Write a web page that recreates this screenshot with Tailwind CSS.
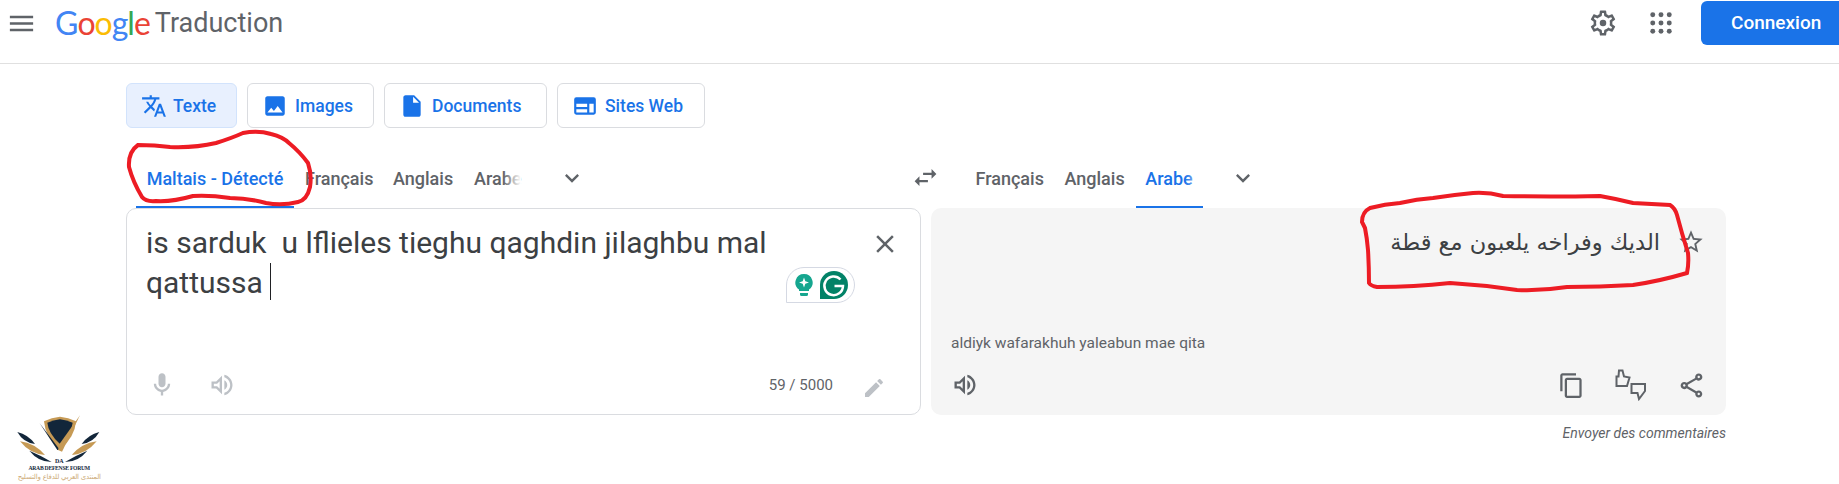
<!DOCTYPE html>
<html lang="fr">

<head>
    <meta charset="UTF-8">
    <title>Google Traduction</title>
    <script src="https://cdn.jsdelivr.net/npm/@tailwindcss/browser@4"></script>
</head>

<body class="relative h-[484px] w-[1839px] overflow-hidden bg-white font-['Roboto',sans-serif] text-[#5f6368]">

    <!-- Header -->
    <header class="flex h-[64px] items-start border-b border-[#e0e0e0]">
        <svg class="ml-[6px] mt-[8px] w-[31px] h-[31px] fill-[#5f6368]" viewBox="0 0 24 24"><path d="M3 18h18v-2H3v2zm0-5h18v-2H3v2zm0-7v2h18V6H3z"/></svg>
        <div class="ml-[18px] mt-[3px] flex h-[40px] items-center font-['Lato',sans-serif] text-[32px] leading-[40px] tracking-[-1px]">
            <span class="text-[#4285f4]">G</span><span class="text-[#ea4335]">o</span><span class="text-[#fbbc04]">o</span><span class="text-[#4285f4]">g</span><span class="text-[#34a853]">l</span><span class="text-[#ea4335]">e</span>
        </div>
        <div class="ml-[5px] mt-[4px] text-[27px] leading-[38px] font-normal text-[#5f6368]">Traduction</div>

        <svg class="ml-auto mt-[8px] w-[30px] h-[30px] fill-[#5f6368]" viewBox="0 0 24 24"><path d="M19.43 12.98c.04-.32.07-.64.07-.98 0-.34-.03-.66-.07-.98l2.11-1.65c.19-.15.24-.42.12-.64l-2-3.46c-.09-.16-.26-.25-.44-.25-.06 0-.12.01-.17.03l-2.49 1c-.52-.4-1.08-.73-1.69-.98l-.38-2.65C14.46 2.18 14.25 2 14 2h-4c-.25 0-.46.18-.49.42l-.38 2.65c-.61.25-1.17.59-1.69.98l-2.49-1c-.06-.02-.12-.03-.18-.03-.17 0-.34.09-.43.25l-2 3.46c-.13.22-.07.49.12.64l2.11 1.65c-.04.32-.07.65-.07.98 0 .33.03.66.07.98l-2.11 1.65c-.19.15-.24.42-.12.64l2 3.46c.09.16.26.25.44.25.06 0 .12-.01.17-.03l2.49-1c.52.4 1.08.73 1.69.98l.38 2.65c.03.24.24.42.49.42h4c.25 0 .46-.18.49-.42l.38-2.65c.61-.25 1.17-.59 1.69-.98l2.49 1c.06.02.12.03.18.03.17 0 .34-.09.43-.25l2-3.46c.12-.22.07-.49-.12-.64l-2.11-1.65zm-1.98-1.71c.04.31.05.52.05.73 0 .21-.02.43-.05.73l-.14 1.13.89.7 1.08.84-.7 1.21-1.27-.51-1.04-.42-.9.68c-.43.32-.84.56-1.25.73l-1.06.43-.16 1.13-.2 1.35h-1.4l-.19-1.35-.16-1.13-1.06-.43c-.43-.18-.83-.41-1.23-.71l-.91-.7-1.06.43-1.27.51-.7-1.21 1.08-.84.89-.7-.14-1.13c-.03-.31-.05-.54-.05-.74s.02-.43.05-.73l.14-1.13-.89-.7-1.08-.84.7-1.21 1.27.51 1.04.42.9-.68c.43-.32.84-.56 1.25-.73l1.06-.43.16-1.13.2-1.35h1.39l.19 1.35.16 1.13 1.06.43c.43.18.83.41 1.23.71l.91.7 1.06-.43 1.27-.51.7 1.21-1.07.85-.89.7.14 1.13z"/><circle cx="12" cy="12" r="2.6"/></svg>
        <svg class="ml-[32px] mt-[12px] w-[22px] h-[22px] fill-[#5f6368]" viewBox="0 0 24 24">
            <circle cx="3" cy="3" r="2.7"/><circle cx="12" cy="3" r="2.7"/><circle cx="21" cy="3" r="2.7"/>
            <circle cx="3" cy="12" r="2.7"/><circle cx="12" cy="12" r="2.7"/><circle cx="21" cy="12" r="2.7"/>
            <circle cx="3" cy="21" r="2.7"/><circle cx="12" cy="21" r="2.7"/><circle cx="21" cy="21" r="2.7"/>
        </svg>
        <button class="ml-[29px] mt-[1px] h-[44px] w-[138px] rounded-l-[6px] bg-[#1a73e8] pl-[30px] text-left text-[19px] font-medium text-white">Connexion</button>
    </header>

    <!-- Mode tabs -->
    <nav class="ml-[126px] mt-[19px] flex h-[45px] gap-[10px] text-[17.5px] font-medium text-[#1a73e8]">
        <button class="flex w-[111px] items-center rounded-[6px] border border-[#d2e3fc] bg-[#e8f0fe] pl-[14px]">
            <svg class="w-[26px] h-[26px] fill-[#1a73e8]" viewBox="0 0 24 24"><path d="M12.87 15.07l-2.54-2.51.03-.03c1.74-1.94 2.98-4.17 3.71-6.53H17V4h-7V2H8v2H1v1.99h11.17C11.5 7.92 10.44 9.75 9 11.35 8.07 10.32 7.3 9.19 6.69 8h-2c.73 1.63 1.73 3.17 2.98 4.56l-5.09 5.02L4 19l5-5 3.11 3.11.76-2.04zM18.5 10h-2L12 22h2l1.12-3h4.75L21 22h2l-4.5-12zm-2.62 7l1.62-4.33L19.12 17h-3.24z"/></svg>
            <span class="ml-[6px] pt-[2px]">Texte</span>
        </button>
        <button class="flex w-[127px] items-center rounded-[6px] border border-[#dadce0] pl-[14px]">
            <svg class="w-[26px] h-[26px] fill-[#1a73e8]" viewBox="0 0 24 24"><path d="M21 19V5c0-1.1-.9-2-2-2H5c-1.1 0-2 .9-2 2v14c0 1.1.9 2 2 2h14c1.1 0 2-.9 2-2zM8.5 13.5l2.5 3.01L14.5 12l4.5 6H5l3.5-4.5z"/></svg>
            <span class="ml-[7px] pt-[2px]">Images</span>
        </button>
        <button class="flex w-[163px] items-center rounded-[6px] border border-[#dadce0] pl-[14px]">
            <svg class="w-[26px] h-[26px] fill-[#1a73e8]" viewBox="0 0 24 24"><path d="M14 2H6c-1.1 0-1.99.9-1.99 2L4 20c0 1.1.89 2 1.99 2H18c1.1 0 2-.9 2-2V8l-6-6zm-1 7V3.5L18.5 9H13z"/></svg>
            <span class="ml-[7px] pt-[2px]">Documents</span>
        </button>
        <button class="flex w-[148px] items-center rounded-[6px] border border-[#dadce0] pl-[14px]">
            <svg class="w-[26px] h-[26px] fill-[#1a73e8]" viewBox="0 0 24 24"><path fill-rule="evenodd" d="M20 4H4a2 2 0 0 0-2 2v12a2 2 0 0 0 2 2h16a2 2 0 0 0 2-2V6a2 2 0 0 0-2-2zM4 10h10v3H4zM4 15h10v3H4zM16 10h4v8h-4z"/></svg>
            <span class="ml-[7px] pt-[2px]">Sites Web</span>
        </button>
    </nav>

    <!-- Language row -->
    <div class="flex h-[80px] text-[18px] font-medium">
        <div class="ml-[136px] flex w-[158px] justify-center border-b-2 border-[#1a73e8] pt-[22px] text-[#1a73e8]"><span class="self-center">Maltais - Détecté</span></div>
        <div class="ml-[11px] flex w-[68px] border-b-2 border-transparent pt-[22px]"><span class="self-center">Français</span></div>
        <div class="ml-[20px] flex w-[60px] border-b-2 border-transparent pt-[22px]"><span class="self-center">Anglais</span></div>
        <div class="relative ml-[21px] flex w-[47px] border-b-2 border-transparent pt-[22px]">
            <span class="self-center">Arabe</span>
            <div class="absolute right-0 top-[36px] h-[24px] w-[18px] bg-linear-to-r from-white/0 to-white"></div>
        </div>
        <svg class="ml-[37px] mt-[36px] w-[28px] h-[28px] fill-[#5f6368]" viewBox="0 0 24 24"><path d="M7.41 8.59L12 13.17l4.59-4.58L18 10l-6 6-6-6z"/></svg>
        <svg class="ml-[325px] mt-[35px] w-[29px] h-[29px] fill-[#5f6368]" viewBox="0 0 24 24"><path d="M6.99 11L3 15l3.99 4v-3H14v-2H6.99v-3zM21 9l-3.99-4v3H10v2h7.01v3L21 9z"/></svg>
        <div class="ml-[35.5px] flex w-[69px] border-b-2 border-transparent pt-[22px]"><span class="self-center">Français</span></div>
        <div class="ml-[20px] flex w-[60px] border-b-2 border-transparent pt-[22px]"><span class="self-center">Anglais</span></div>
        <div class="relative ml-[11px] flex w-[67px] justify-center border-b-2 border-[#1a73e8] pt-[22px] text-[#1a73e8]">
            <span class="self-center">Arabe</span>
            <div class="absolute right-0 top-[36px] h-[26px] w-[18px] bg-linear-to-r from-white/0 to-white/80"></div>
        </div>
        <svg class="ml-[26px] mt-[36px] w-[28px] h-[28px] fill-[#5f6368]" viewBox="0 0 24 24"><path d="M7.41 8.59L12 13.17l4.59-4.58L18 10l-6 6-6-6z"/></svg>
    </div>

    <!-- Translation cards -->
    <main class="ml-[126px] flex items-start gap-[10px]">
        <section class="relative flex h-[207px] w-[795px] flex-col rounded-[10px] border border-[#dadce0]">
            <div class="flex items-start justify-between pr-[11px]">
                <p class="w-[660px] whitespace-pre-wrap pl-[19px] pt-[14px] text-[30px] leading-[40px] text-[#3c4043]">is sarduk  u lflieles tieghu qaghdin jilaghbu mal qattussa <span class="relative"><span class="absolute left-0 top-[-2px] h-[37px] w-px bg-[#202124]"></span></span></p>
                <button class="mt-[11px] flex h-[48px] w-[48px] items-center justify-center">
                    <svg class="w-[30px] h-[30px] fill-[#5f6368]" viewBox="0 0 24 24"><path d="M19 6.41L17.59 5 12 10.59 6.41 5 5 6.41 10.59 12 5 17.59 6.41 19 12 13.41 17.59 19 19 17.59 13.41 12z"/></svg>
                </button>
            </div>
            <div class="mb-[5px] mt-auto flex h-[48px] items-center gap-[12px] pl-[11px] pr-[22px]">
                <div class="flex h-[48px] w-[48px] items-center justify-center">
                    <svg class="w-[28px] h-[28px] fill-[#bdc1c6]" viewBox="0 0 24 24"><path d="M12 14c1.66 0 3-1.34 3-3V5c0-1.66-1.34-3-3-3S9 3.34 9 5v6c0 1.66 1.34 3 3 3zM17 11c0 2.76-2.24 5-5 5s-5-2.24-5-5H5c0 3.53 2.61 6.43 6 6.92V21h2v-3.08c3.39-.49 6-3.39 6-6.92h-2z"/></svg>
                </div>
                <div class="flex h-[48px] w-[48px] items-center justify-center">
                    <svg class="w-[28px] h-[28px] fill-[#bdc1c6]" viewBox="0 0 24 24"><path d="M3 9v6h4l5 5V4L7 9H3zm7-.17v6.34L7.83 13H5v-2h2.83L10 8.83zM16.5 12c0-1.77-1.02-3.29-2.5-4.03v8.05c1.48-.73 2.5-2.25 2.5-4.02zM14 3.23v2.06c2.89.86 5 3.54 5 6.71s-2.11 5.85-5 6.71v2.06c4.01-.91 7-4.49 7-8.77 0-4.28-2.99-7.86-7-8.77z"/></svg>
                </div>
                <span class="ml-auto mr-[5px] text-[15px]">59 / 5000</span>
                <div class="flex h-[48px] w-[48px] items-center justify-center pt-[6px]">
                    <svg class="w-[24px] h-[24px] fill-[#bdc1c6]" viewBox="0 0 24 24"><path d="M3 17.25V21h3.75L17.81 9.94l-3.75-3.75L3 17.25zM20.71 7.04c.39-.39.39-1.02 0-1.41l-2.34-2.34c-.39-.39-1.02-.39-1.41 0l-1.83 1.83 3.75 3.75 1.83-1.83z"/></svg>
                </div>
            </div>

            <!-- Grammarly widget -->
            <div class="absolute left-[659px] top-[58px] flex h-[36px] w-[69px] items-center rounded-t-[18px] rounded-br-[18px] border border-[#d5d9e3] bg-white">
                <svg class="ml-[8px] w-[18px] h-[22px]" viewBox="0 0 18 22">
                    <path class="fill-[#15a68f]" d="M9 0a8.6 8.6 0 0 1 5 15.6V17H4v-1.4A8.6 8.6 0 0 1 9 0zM5 19h8v1.5q0 1.5-1.5 1.5h-5Q5 22 5 20.5z"/>
                    <path class="fill-white" d="M9 3.5l1.3 3.7 3.7 1.3-3.7 1.3L9 13.5l-1.3-3.7L4 8.5l3.7-1.3z"/>
                </svg>
                <svg class="ml-[7px] w-[28px] h-[28px]" viewBox="0 0 28 28">
                    <path class="fill-[#028267]" d="M14 0a14 14 0 0 1 0 28H0V14A14 14 0 0 1 14 0z"/>
                    <path class="fill-none stroke-white stroke-[2.5]" d="M20.5 8.5A9.3 9.3 0 1 0 23 15H14.5"/>
                </svg>
            </div>
        </section>

        <div class="w-[795px]">
            <section class="flex h-[207px] flex-col rounded-[10px] bg-[#f5f5f5]">
                <div class="flex items-start justify-end pr-[11px]">
                    <p dir="rtl" class="mr-[7px] pt-[14px] font-['DejaVu_Sans',sans-serif] text-[22.5px] leading-[40px] text-[#3c4043]">الديك وفراخه يلعبون مع قطة</p>
                    <div class="mt-[14px] flex h-[40px] w-[48px] items-center justify-center">
                        <svg class="w-[28px] h-[28px] fill-[#5f6368]" viewBox="0 0 24 24"><path d="M22 9.24l-7.19-.62L12 2 9.19 8.63 2 9.24l5.46 4.73L5.82 21 12 17.27 18.18 21l-1.63-7.03L22 9.24zM12 15.4l-3.76 2.27 1-4.28-3.32-2.88 4.38-.38L12 6.1l1.71 4.04 4.38.38-3.32 2.88 1 4.28L12 15.4z"/></svg>
                    </div>
                </div>
                <p class="mt-auto pl-[20px] text-[15.5px] leading-[24px] text-[#5f6368]">aldiyk wafarakhuh yaleabun mae qita</p>
                <div class="mb-[6px] mt-[6px] flex h-[48px] items-center gap-[12px] pl-[10px] pr-[11px]">
                    <div class="flex h-[48px] w-[48px] items-center justify-center">
                        <svg class="w-[28px] h-[28px] fill-[#5f6368]" viewBox="0 0 24 24"><path d="M3 9v6h4l5 5V4L7 9H3zm7-.17v6.34L7.83 13H5v-2h2.83L10 8.83zM16.5 12c0-1.77-1.02-3.29-2.5-4.03v8.05c1.48-.73 2.5-2.25 2.5-4.02zM14 3.23v2.06c2.89.86 5 3.54 5 6.71s-2.11 5.85-5 6.71v2.06c4.01-.91 7-4.49 7-8.77 0-4.28-2.99-7.86-7-8.77z"/></svg>
                    </div>
                    <div class="ml-auto flex h-[48px] w-[48px] items-center justify-center">
                        <svg class="w-[27px] h-[27px] fill-[#5f6368]" viewBox="0 0 24 24"><path d="M16 1H4c-1.1 0-2 .9-2 2v14h2V3h12V1zm3 4H8c-1.1 0-2 .9-2 2v14c0 1.1.9 2 2 2h11c1.1 0 2-.9 2-2V7c0-1.1-.9-2-2-2zm0 16H8V7h11v14z"/></svg>
                    </div>
                    <div class="flex h-[48px] w-[48px] items-center justify-center">
                        <svg class="w-[32px] h-[32px] fill-none stroke-[#5f6368] stroke-2" viewBox="0 0 32 32">
                            <path d="M1.5 7.5V17H12l2.5-8.5L9 7.5 7.5 1.5H4L3.5 7.5z"/>
                            <path d="M16.5 15H30v7l-6 8-1.5-6h-6z"/>
                        </svg>
                    </div>
                    <div class="flex h-[48px] w-[48px] items-center justify-center">
                        <svg class="w-[29px] h-[29px] fill-[#5f6368]" viewBox="0 0 24 24"><path d="M18 16.08c-.76 0-1.44.3-1.96.77L8.91 12.7c.05-.23.09-.46.09-.7s-.04-.47-.09-.7l7.05-4.11c.54.5 1.25.81 2.04.81 1.66 0 3-1.34 3-3s-1.34-3-3-3-3 1.34-3 3c0 .24.04.47.09.7L8.04 9.81C7.5 9.31 6.79 9 6 9c-1.66 0-3 1.34-3 3s1.34 3 3 3c.79 0 1.5-.31 2.04-.81l7.12 4.16c-.05.21-.08.43-.08.65 0 1.61 1.31 2.92 2.92 2.92s2.92-1.31 2.92-2.92-1.31-2.92-2.92-2.92zM18 4c.55 0 1 .45 1 1s-.45 1-1 1-1-.45-1-1 .45-1 1-1zM6 13c-.55 0-1-.45-1-1s.45-1 1-1 1 .45 1 1-.45 1-1 1zm12 7.02c-.55 0-1-.45-1-1s.45-1 1-1 1 .45 1 1-.45 1-1 1z"/></svg>
                    </div>
                </div>
            </section>
            <p class="mt-[9px] text-right text-[14px] italic leading-[18px] text-[#5f6368]">Envoyer des commentaires</p>
        </div>
    </main>

    <!-- Red marker annotations -->
    <svg class="pointer-events-none absolute left-0 top-0 w-[1839px] h-[484px] fill-none stroke-[#ed1c24] stroke-[4]" viewBox="0 0 1839 484">
        <path d="M138 145 Q155 145 170 147 Q195 148 216 143 Q232 138 243 133 Q258 130 271 134 Q283 137 289 143 Q300 152 308 163 Q312 175 310 187 Q307 200 298 202 Q282 206 266 203 Q248 198 230 198 Q210 195 193 196 Q172 202 156 201 Q146 202 142 197 Q133 182 129 167 Q128 152 138 145z"/>
        <path d="M1362 222 Q1362 212 1370 208 Q1385 204 1400 203 Q1417 199 1433 198 Q1452 195 1473 193 Q1488 192 1503 196 Q1550 197 1600 196 Q1617 199 1633 203 Q1652 204 1670 205 Q1675 208 1677 215 Q1682 234 1688 253 Q1689 264 1687 273 Q1660 281 1633 285 Q1600 287 1567 287 Q1542 291 1517 290 Q1484 285 1450 283 Q1414 287 1377 287 Q1371 286 1369 283 Q1369 266 1368 250 Q1367 238 1365 228z"/>
    </svg>

    <!-- Forum watermark -->
    <svg class="absolute bottom-0 left-0 w-[120px] h-[84px]" viewBox="0 0 360 252">
        <path fill="#c69a55" d="M180 50 Q205 52 228 64 Q225 110 180 150 Q135 110 132 64 Q155 52 180 50z"/>
        <path fill="#12263a" d="M180 58 Q200 60 218 68 Q215 100 180 132 Q145 100 142 68 Q160 60 180 58z"/>
        <path fill="#12263a" d="M118 68 L180 150 L172 150z"/>
        <path fill="#c69a55" d="M240 46 L186 155 L174 150 L180 130z"/>
        <path fill="#12263a" d="M52 96 Q85 104 105 132 Q70 128 52 96z"/>
        <path fill="#c69a55" d="M60 124 Q105 130 135 165 Q90 162 60 124z"/>
        <path fill="#12263a" d="M88 152 Q120 165 155 186 Q115 186 88 152z"/>
        <path fill="#12263a" d="M298 96 Q265 104 245 132 Q280 128 298 96z"/>
        <path fill="#c69a55" d="M290 124 Q245 130 215 165 Q260 162 290 124z"/>
        <path fill="#12263a" d="M262 152 Q230 165 195 186 Q235 186 262 152z"/>
        <text x="178" y="188" text-anchor="middle" fill="#12263a" font-family="Liberation Serif" font-weight="700" font-size="18">DA</text>
        <text x="178" y="209" text-anchor="middle" fill="#12263a" font-family="Liberation Serif" font-weight="700" font-size="17" textLength="185">ARAB DEFENSE FORUM</text>
        <text x="178" y="238" text-anchor="middle" fill="#cdab78" font-family="DejaVu Sans" font-size="21" textLength="250">المنتدى العربي للدفاع والتسليح</text>
    </svg>

</body>

</html>
